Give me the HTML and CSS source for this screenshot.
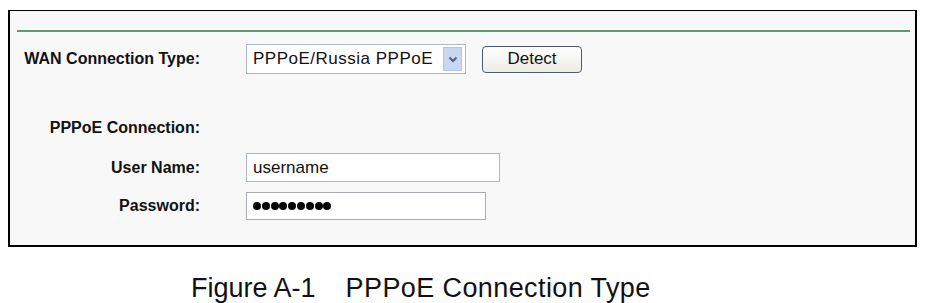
FILE: index.html
```html
<!DOCTYPE html>
<html>
<head>
<meta charset="utf-8">
<link rel="stylesheet" href="styles.css">
</head>
<body>
<div class="frame">
  <div class="rule"></div>
  <div class="form">
    <div class="label">WAN Connection Type:</div>
    <div class="controls">
      <div class="select">
        <span class="select-text">PPPoE/Russia PPPoE</span>
        <span class="arrow"><svg width="10" height="7" viewBox="0 0 10 7"><path d="M1.5 1.5 L5 5 L8.5 1.5" fill="none" stroke="#4d6185" stroke-width="2"/></svg></span>
      </div>
      <div class="button">Detect</div>
    </div>
    <div class="label section">PPPoE Connection:</div>
    <div class="section"></div>
    <div class="label">User Name:</div>
    <div class="input username">username</div>
    <div class="label">Password:</div>
    <div class="input password"><span class="dot"></span><span class="dot"></span><span class="dot"></span><span class="dot"></span><span class="dot"></span><span class="dot"></span><span class="dot"></span><span class="dot"></span><span class="dot"></span></div>
  </div>
</div>
<div class="caption">Figure A-1<span class="caption-title">PPPoE Connection Type</span></div>
</body>
</html>
```
FILE: styles.css
```css
html, body {
  margin: 0;
  padding: 0;
  background: #ffffff;
}
body {
  font-family: "Liberation Sans", Arial, sans-serif;
  color: #000;
}
.frame {
  box-sizing: border-box;
  width: 909px;
  height: 237px;
  margin: 10px 0 0 8px;
  border-style: solid;
  border-color: #000;
  border-width: 1px 2px 2px 2px;
  background: #f8f8f8;
}
.rule {
  height: 2px;
  background: #5b9a7c;
  margin: 19px 5px 0 7px;
}
.form {
  display: grid;
  grid-template-columns: 190px auto;
  column-gap: 46px;
  row-gap: 10px;
  margin-top: 12px;
  align-items: center;
}
.label {
  text-align: right;
  font-weight: bold;
  font-size: 16px;
  line-height: 18px;
  color: #111;
}
.controls {
  display: flex;
  align-items: center;
  gap: 16px;
}
.select {
  box-sizing: border-box;
  width: 220px;
  height: 30px;
  border: 1px solid #a9b9cb;
  background: #fff;
  display: flex;
  align-items: center;
  justify-content: space-between;
  padding: 0 3px 0 6px;
}
.select-text {
  font-size: 17px;
  letter-spacing: 0.5px;
  color: #111;
}
.arrow {
  width: 19px;
  height: 24px;
  background: #c9d8f0;
  border: 1px solid #b4c6e4;
  box-sizing: border-box;
  display: flex;
  align-items: center;
  justify-content: center;
}
.button {
  box-sizing: border-box;
  width: 100px;
  height: 27px;
  border: 1px solid #4d5a6b;
  border-radius: 4px;
  background: linear-gradient(#ffffff, #ecebe6);
  font-size: 17px;
  display: flex;
  align-items: center;
  justify-content: center;
  color: #111;
}
.section {
  margin-top: 35px;
  margin-bottom: 6px;
}
.input {
  box-sizing: border-box;
  height: 29px;
  border: 1px solid #a9b9cb;
  background: #fff;
  display: flex;
  align-items: center;
  padding-left: 6px;
  font-size: 17px;
  color: #111;
}
.username {
  width: 254px;
}
.password {
  width: 240px;
  height: 28px;
  border-color: #a8acb2;
  gap: 0.8px;
}
.dot {
  width: 8px;
  height: 8px;
  border-radius: 50%;
  background: #000;
}
.caption {
  margin: 26px 0 0 191px;
  font-size: 27px;
  line-height: 30px;
  color: #111;
}
.caption-title {
  margin-left: 30px;
  letter-spacing: 0.4px;
}
```
